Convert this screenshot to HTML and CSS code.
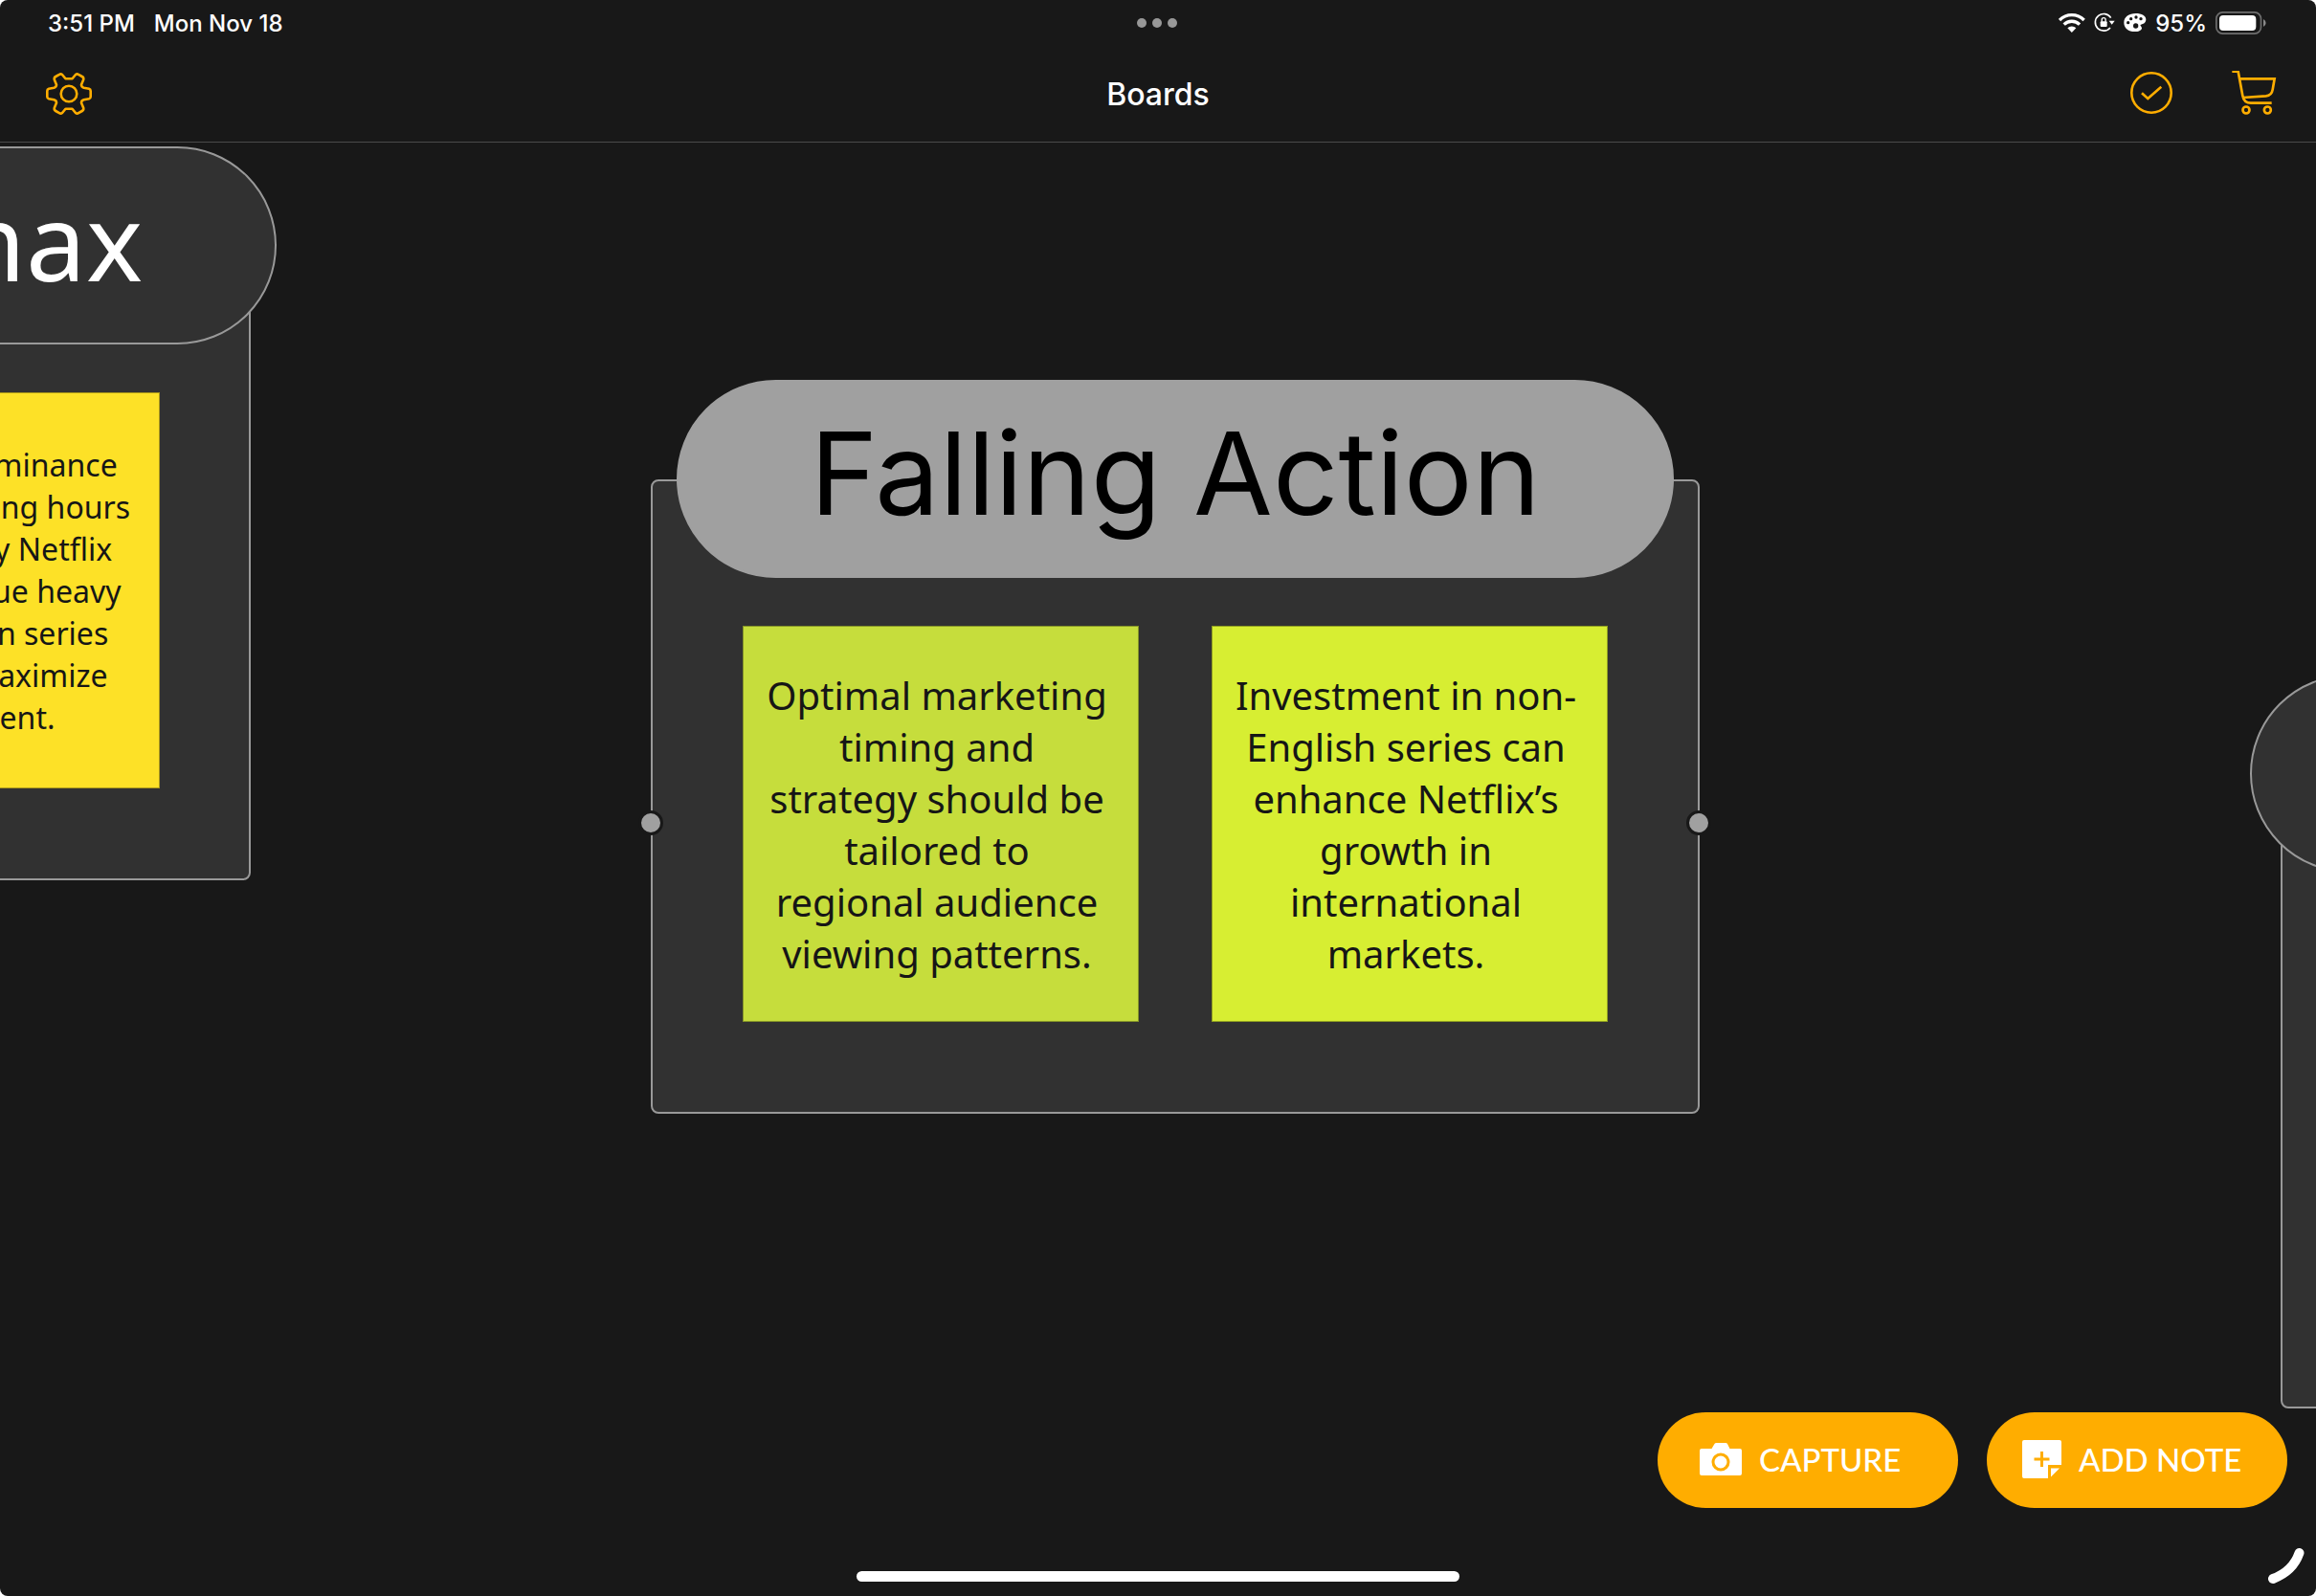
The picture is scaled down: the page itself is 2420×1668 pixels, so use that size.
FILE: index.html
```html
<!DOCTYPE html>
<html lang="en">
<head>
<meta charset="utf-8">
<meta name="viewport" content="width=device-width, initial-scale=1">
<title>Boards</title>
<link rel="stylesheet" href="styles.css">
</head>
<body>
<div class="screen">
  <div class="status-bar">
    <div class="status-left"><span>3:51 PM</span><span>Mon Nov 18</span></div>
    <button class="icon-button" type="button" aria-label="Window options">
      <svg width="42" height="10" viewBox="0 0 42 10" fill="#989898"><circle cx="5" cy="5" r="5"/><circle cx="21" cy="5" r="5"/><circle cx="37" cy="5" r="5"/></svg>
    </button>
    <div class="status-right">
      <svg width="28" height="24" viewBox="87 36 84 72" fill="none" stroke="#fff" stroke-width="10">
        <path d="M90 63A54 54 0 0 1 167 63M104 77A34.5 34.5 0 0 1 153 77"/>
        <path d="M128.500 102L115 88A19 19 0 0 1 142 88Z" fill="#fff" stroke="none"/>
      </svg>
      <svg width="22" height="24" viewBox="199 36 66 72" fill="none" stroke="#fff" stroke-width="5">
        <path d="M250 87A26.500 26.500 0 1 1 252 56"/>
        <path d="M246 65H264L255 77Z" fill="#fff" stroke="none"/>
        <rect x="219" y="67" width="21" height="17" rx="3" fill="#fff" stroke="none"/>
        <path d="M223.500 68V62a6 6 0 0 1 12 0V68" stroke-width="4"/>
      </svg>
      <svg width="24" height="24" viewBox="296 36 72 72">
        <path fill="#fff" d="M334 42C353 42 366 50 366 61C366 72 357 76 350 77C345 79 354 83 353 89C351 96 342 99 331 99C311 99 297 88 297 71C297 53 313 42 334 42Z"/>
        <g fill="#181818"><circle cx="319" cy="59" r="5"/><circle cx="335" cy="54" r="5"/><circle cx="350" cy="59" r="5"/><circle cx="310" cy="71" r="5"/><circle cx="334" cy="81" r="8"/></g>
      </svg>
      <span>95%</span>
      <svg width="53" height="24" viewBox="585 36 159 72">
        <rect x="587.500" y="38.500" width="140" height="67" rx="20" fill="none" stroke="#6e6e6e" stroke-width="5"/>
        <rect x="597" y="48" width="115" height="48" rx="12" fill="#fff"/>
        <path d="M735 60Q743 64 743 72T735 84Z" fill="#8a8a8a"/>
      </svg>
    </div>
  </div>

  <header class="nav-bar">
    <div class="nav-side">
      <button class="icon-button" type="button" aria-label="Settings">
        <svg width="48" height="48" viewBox="-24 -24 48 48" fill="none" stroke="#ffad00" stroke-width="2.600" stroke-linejoin="round">
          <path d="M3.500-15.700L7-20Q8.500-21.200 10-20.200L13.800-18Q15.700-17 15.200-14.800L13-9.500Q13-7 15.500-6.300L21-5.300Q22.700-4.800 22.700-3V3Q22.700 4.800 21 5.300L15.500 6.300Q13 7 13 9.500L15.200 14.800Q15.700 17 13.800 18L10 20.200Q8.500 21.200 7 20L3.500 15.700H-3.500L-7 20Q-8.500 21.200-10 20.200L-13.800 18Q-15.700 17-15.200 14.800L-13 9.500Q-13 7-15.500 6.300L-21 5.300Q-22.700 4.800-22.700 3V-3Q-22.700-4.800-21-5.300L-15.500-6.300Q-13-7-13-9.500L-15.200-14.800Q-15.700-17-13.800-18L-10-20.200Q-8.500-21.200-7-20L-3.500-15.700Z"/>
          <circle r="8.300"/>
        </svg>
      </button>
    </div>
    <h1 class="nav-title">Boards</h1>
    <div class="nav-side nav-actions">
      <button class="icon-button" type="button" aria-label="Select">
        <svg width="48" height="48" viewBox="-24 -23 48 48" fill="none" stroke="#ffad00" stroke-width="2.600"><circle r="20.700"/><path d="M-10 0.300L-3.700 6L10.300-6.300"/></svg>
      </button>
      <button class="icon-button" type="button" aria-label="Cart">
        <svg width="53" height="48" viewBox="632 222 159 144" fill="none" stroke="#ffad00" stroke-width="8">
          <path d="M636 224H655L669 300Q673 323 695 323H760"/><path d="M658 247H769L763 281Q760 299 742 301L670 306"/>
          <circle cx="680" cy="345" r="10.500"/><circle cx="747" cy="345" r="10.500"/>
        </svg>
      </button>
    </div>
  </header>

  <main class="canvas">
    <section class="group group-climax">
      <h2 class="group-title">Climax</h2>
      <div class="notes">
        <p class="note note-yellow">Its English dominance<br>in weekly viewing hours<br>strongly imply Netflix<br>should continue heavy<br>investment on series<br>in order to maximize<br>engagement.</p>
      </div>
    </section>

    <section class="group group-falling">
      <h2 class="group-title selected">Falling Action</h2>
      <div class="notes">
        <p class="note note-green">Optimal marketing timing and strategy should be tailored to<br>regional audience viewing patterns.</p>
        <p class="note note-lime">Investment in non-English series can enhance Netflix’s growth in international markets.</p>
      </div>
      <span class="handle handle-left"></span>
      <span class="handle handle-right"></span>
    </section>

    <section class="group group-next">
      <div class="group-title"></div>
    </section>

    <div class="actions">
      <button class="action" type="button">
        <svg width="44" height="34" viewBox="0 0 44 34"><path fill="#fff" d="M2 6H12.500L15.500 1Q16 0 17.500 0H27Q28.500 0 29 1L31.500 6H42Q44 6 44 8V32Q44 34 42 34H2Q0 34 0 32V8Q0 6 2 6Z"/><circle cx="22" cy="20" r="8" fill="#fff" stroke="#ffad00" stroke-width="3"/></svg>
        <span>CAPTURE</span>
      </button>
      <button class="action action-add" type="button">
        <svg width="41" height="40" viewBox="0 0 41 40"><path fill="#fff" d="M2 0H39Q41 0 41 2V26H27V40H2Q0 40 0 38V2Q0 0 2 0ZM30 29.500H39L30 38.500Z"/><path d="M12.500 20H28.500M20.500 12V28" stroke="#ffad00" stroke-width="3"/></svg>
        <span>ADD NOTE</span>
      </button>
    </div>
    <svg class="corner-cue" width="50" height="50" viewBox="2370 1618 50 50" fill="none" stroke="#fff" stroke-width="10" stroke-linecap="round"><path d="M2402.500 1623Q2396 1642 2375 1650"/></svg>
    <div class="home-indicator"></div>
  </main>
</div>
</body>
</html>
```
FILE: styles.css
```css
* { box-sizing: border-box; }

body {
  margin: 0;
  background: #fff;
  color: #fff;
  font-family: Inter, "Liberation Sans", sans-serif;
}

.screen {
  display: flex;
  flex-direction: column;
  min-height: 100vh;
  overflow: hidden;
  border-radius: 8px;
  background: #181818;
}

.icon-button {
  display: flex;
  padding: 0;
  border: 0;
  background: none;
  cursor: pointer;
}

.status-bar,
.nav-bar {
  display: grid;
  grid-template-columns: 1fr auto 1fr;
  align-items: center;
}

.status-bar {
  height: 48px;
  padding: 0 52px 0 50px;
  font-size: 24px;
  font-weight: 500;
}

.status-left { display: flex; gap: 20px; }

.status-right {
  display: flex;
  align-items: center;
  justify-content: flex-end;
  gap: 9px;
}

.nav-bar {
  height: 101px;
  padding: 0 36px;
  border-bottom: 1px solid #4a4a4a;
}

.nav-side { display: flex; padding-left: 12px; }

.nav-actions { justify-content: flex-end; gap: 59px; }

.nav-title {
  margin: 0;
  font-size: 32px;
  font-weight: 500;
}

.canvas {
  position: relative;
  flex: 1;
  overflow: hidden;
}

.group {
  position: absolute;
  height: 663px;
  border: 2px solid #999;
  border-radius: 8px;
  background: #313131;
}

.group-climax { left: -342px; top: 108px; width: 604px; }
.group-falling { left: 680px; top: 352px; width: 1096px; }
.group-next { left: 2383px; top: 660px; width: 1096px; }

.group-title {
  display: flex;
  align-items: center;
  justify-content: center;
  height: 207px;
  margin: -106px 25px 0;
  padding-bottom: 12px;
  border: 2px solid #999;
  border-radius: 104px;
  background: #313131;
  font-family: "Noto Sans", sans-serif;
  font-size: 112px;
  font-weight: 400;
  line-height: 1;
  white-space: nowrap;
}

.group-title.selected {
  border-color: #a0a0a0;
  background: #a0a0a0;
  color: #000;
  font-family: Inter, sans-serif;
  font-size: 120px;
}

.group-climax .group-title { margin: -106px -29px 0 -6px; }
.group-next .group-title { margin: -106px -34px 0; }

.notes {
  display: flex;
  justify-content: center;
  gap: 76px;
  margin-top: 50px;
}

.note {
  display: flow-root;
  width: 414px;
  height: 414px;
  margin: 0;
  padding: 45px 28px 0 20px;
  border: 1px solid #00000055;
  color: #161616;
  font-family: "Noto Sans", sans-serif;
  font-size: 40px;
  line-height: 54px;
  text-align: center;
}

.note-green { background: #c6dd3c; }
.note-lime { background: #d7ee32; }

.note-yellow {
  padding: 53px 6px 0 0;
  background: #fde127;
  font-size: 32px;
  line-height: 44px;
  white-space: nowrap;
}

.handle {
  position: absolute;
  top: 344px;
  width: 26px;
  height: 26px;
  border: 3px solid #181818;
  border-radius: 50%;
  background: #a0a0a0;
}

.handle-left { left: -15px; }
.handle-right { right: -14px; }

.actions {
  position: absolute;
  right: 30px;
  bottom: 92px;
  display: flex;
  gap: 30px;
}

.action {
  display: flex;
  align-items: center;
  gap: 18px;
  width: 314px;
  height: 100px;
  padding: 0 0 2px 44px;
  border: 0;
  border-radius: 50px;
  background: #ffad00;
  color: #fff;
  font-family: Lato, sans-serif;
  font-size: 33px;
  font-weight: 500;
  white-space: nowrap;
  cursor: pointer;
}

.action-add { padding-left: 37px; }

.corner-cue {
  position: absolute;
  right: 0;
  bottom: 0;
}

.home-indicator {
  position: absolute;
  bottom: 15px;
  left: 37%;
  right: 37%;
  height: 11px;
  border-radius: 6px;
  background: #fff;
}
```
